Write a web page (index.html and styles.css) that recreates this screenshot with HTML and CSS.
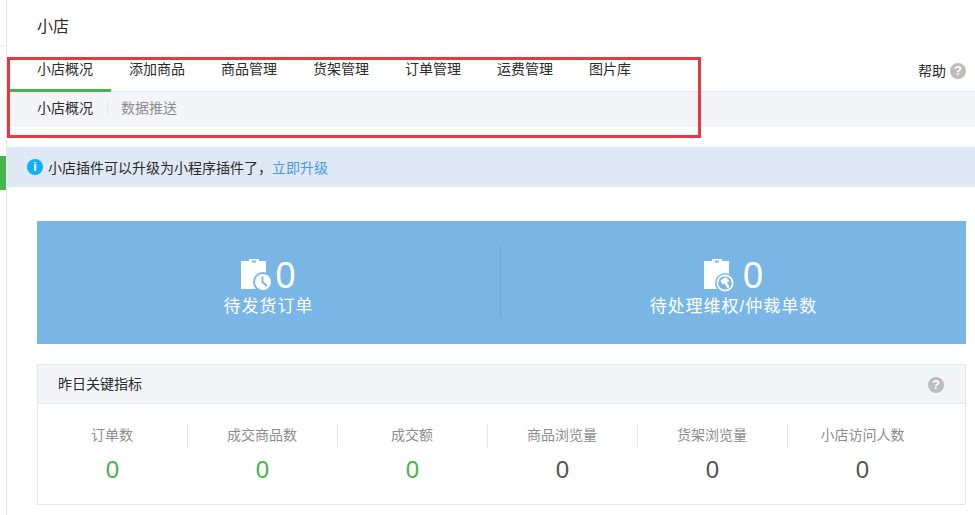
FILE: index.html
```html
<!DOCTYPE html>
<html lang="zh-CN">
<head>
    <meta charset="UTF-8">
    <title>小店</title>
    <link rel="stylesheet" href="styles.css">
</head>
<body>
    <div class="side">
        <div class="side-line"></div>
        <div class="side-mark"></div>
    </div>
    <div class="main">
        <h2 class="title">小店</h2>
        <div class="tabs">
            <a class="tab active">小店概况</a>
            <a class="tab">添加商品</a>
            <a class="tab">商品管理</a>
            <a class="tab">货架管理</a>
            <a class="tab">订单管理</a>
            <a class="tab">运费管理</a>
            <a class="tab">图片库</a>
            <span class="help">帮助 <i class="q">?</i></span>
        </div>
        <div class="subtabs">
            <a class="sub active">小店概况</a>
            <a class="sub">数据推送</a>
        </div>
        <div class="notice">
            <i class="info">i</i>
            <span>小店插件可以升级为小程序插件了，<a class="link">立即升级</a></span>
        </div>
        <div class="panel">
            <div class="stat">
                <div class="stat-top">
                    <svg class="clip" width="33" height="34" viewBox="0 0 33 34">
                        <path fill="#fff" d="M0 3h8V1h10v2h7v28H0z"/>
                        <rect x="11" y="2.500" width="4" height="2" fill="#7ab6e5"/>
                        <circle cx="22" cy="24" r="10" fill="#7ab6e5"/>
                        <circle cx="22" cy="24" r="8" fill="#fff"/>
                        <path d="M21.500 18.500v5.500l4.500 4" fill="none" stroke="#7ab6e5" stroke-width="1.800"/>
                    </svg>
                    <span class="stat-num">0</span>
                </div>
                <p class="stat-label">待发货订单</p>
            </div>
            <div class="stat">
                <div class="stat-top">
                    <svg class="clip clip-wide" width="33" height="34" viewBox="0 0 33 34">
                        <path fill="#fff" d="M0 3h8V1h10v2h7v28H0z"/>
                        <rect x="11" y="2.500" width="4" height="2" fill="#7ab6e5"/>
                        <circle cx="21" cy="25" r="10" fill="#7ab6e5"/>
                        <circle cx="21" cy="25" r="8.500" fill="#fff"/>
                        <circle cx="21" cy="25" r="6.800" fill="#7ab6e5"/>
                        <path d="M16.500 22.500l5-3.500 4 4-2.500 1.500 2.500 4.500-2 1.500-3-5-2 1z" fill="#fff"/>
                    </svg>
                    <span class="stat-num">0</span>
                </div>
                <p class="stat-label">待处理维权/仲裁单数</p>
            </div>
        </div>
        <div class="card">
            <div class="card-head">
                <span>昨日关键指标</span>
                <i class="q q-card">?</i>
            </div>
            <div class="metrics">
                <div class="metric"><p class="metric-name">订单数</p><p class="metric-num green">0</p></div>
                <div class="metric"><p class="metric-name">成交商品数</p><p class="metric-num green">0</p></div>
                <div class="metric"><p class="metric-name">成交额</p><p class="metric-num green">0</p></div>
                <div class="metric"><p class="metric-name">商品浏览量</p><p class="metric-num">0</p></div>
                <div class="metric"><p class="metric-name">货架浏览量</p><p class="metric-num">0</p></div>
                <div class="metric"><p class="metric-name">小店访问人数</p><p class="metric-num">0</p></div>
            </div>
        </div>
    </div>
    <div class="redbox"></div>
</body>
</html>
```

FILE: styles.css
```css
* {
    box-sizing: border-box;
}
html, body {
    overflow: hidden;
}
body {
    margin: 0;
    width: 975px;
    height: 515px;
    display: flex;
    font-family: "Liberation Sans", "Noto Sans CJK SC", sans-serif;
    font-size: 14px;
    color: #2b2b2b;
    background: white;
}
p {
    margin: 0;
}
i {
    font-style: normal;
}
.side {
    width: 7px;
    height: 515px;
    flex-shrink: 0;
    border-right: 1px solid #e7e7eb;
}
.side-line {
    height: 47px;
    border-bottom: 1px solid #efefef;
}
.side-mark {
    height: 34px;
    margin-top: 109px;
    background: #44b549;
}
.main {
    flex: 1;
    min-width: 0;
}
.title {
    margin: 0;
    height: 57px;
    padding: 16px 0 0 30px;
    font-size: 16px;
    line-height: 22px;
    font-weight: normal;
}
.tabs {
    display: flex;
    height: 35px;
    border-bottom: 1px solid #e7e7eb;
}
.tab {
    padding: 0 18px;
    height: 35px;
    line-height: 24px;
}
.tab:first-child {
    width: 104px;
    padding-left: 30px;
}
.tab.active {
    border-bottom: 3px solid #44b549;
}
.help {
    margin-left: auto;
    padding: 4px 9px 0 0;
    display: flex;
    gap: 4px;
    line-height: 20px;
    height: 30px;
}
.q {
    display: inline-block;
    width: 16px;
    height: 16px;
    margin-top: 2px;
    border-radius: 50%;
    background: #bdbdbd;
    color: white;
    font-size: 13px;
    font-weight: bold;
    line-height: 16px;
    text-align: center;
}
.subtabs {
    display: flex;
    align-items: center;
    height: 35px;
    padding: 0 0 3px 30px;
    background: #f4f5f9;
}
.sub {
    line-height: 14px;
    color: #8d8d8d;
}
.sub.active {
    color: #2b2b2b;
    padding-right: 14px;
    margin-right: 13px;
    border-right: 1px solid #e7e7eb;
}
.notice {
    display: flex;
    align-items: center;
    gap: 5px;
    height: 40px;
    margin-top: 20px;
    padding-left: 20px;
    background: #dfe9f5;
}
.info {
    width: 16px;
    height: 16px;
    border-radius: 50%;
    background: #10aeff;
    color: white;
    font-size: 13px;
    font-weight: bold;
    line-height: 16px;
    text-align: center;
}
.link {
    color: #459ae9;
}
.panel {
    display: flex;
    align-items: center;
    width: 929px;
    height: 123px;
    margin: 34px 0 0 30px;
    background: #7ab6e5;
}
.stat {
    flex: 1;
    height: 71px;
    color: white;
    text-align: center;
}
.stat:first-child {
    flex: none;
    width: 464px;
    border-right: 1px solid #6ea6d2;
}
.stat-top {
    display: flex;
    justify-content: center;
    align-items: center;
    height: 44px;
    padding-top: 12px;
}
.stat-num {
    font-size: 36px;
    line-height: 38px;
    padding-top: 2px;
}
.clip {
    margin-right: 1px;
}
.clip-wide {
    margin-right: 6px;
}
.stat-label {
    margin-top: 4px;
    font-size: 17px;
    line-height: 24px;
    letter-spacing: 1px;
}
.card {
    width: 929px;
    height: 141px;
    margin: 20px 0 0 30px;
    border: 1px solid #e7e7eb;
}
.card-head {
    display: flex;
    justify-content: space-between;
    align-items: center;
    height: 39px;
    padding: 0 21px 2px 20px;
    background: #f4f5f9;
    border-bottom: 1px solid #e7e7eb;
}
.q-card {
    margin-top: 3px;
}
.metrics {
    display: flex;
    padding-top: 20px;
}
.metric {
    width: 150px;
    text-align: center;
}
.metric-name {
    height: 23px;
    line-height: 23px;
    padding-right: 1px;
    color: #8d8d8d;
    border-right: 1px solid #e7e7eb;
}
.metric:last-child .metric-name {
    border-right: 0;
}
.metric-num {
    margin-top: 9px;
    padding-right: 1px;
    font-size: 24px;
    line-height: 28px;
    color: #555;
}
.metric-num.green {
    color: #44b549;
}
/* annotation box drawn over the page */
.redbox {
    position: absolute;
    left: 7px;
    top: 57px;
    width: 694px;
    height: 81px;
    border: 3px solid #e8393f;
}
```
